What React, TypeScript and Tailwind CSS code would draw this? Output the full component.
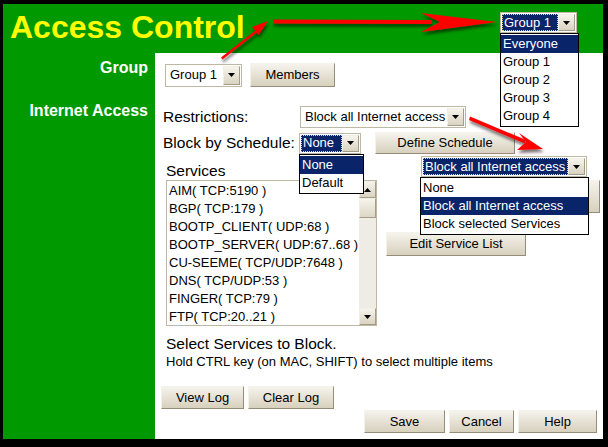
import React from 'react';

const services = [
  'AIM( TCP:5190 )',
  'BGP( TCP:179 )',
  'BOOTP_CLIENT( UDP:68 )',
  'BOOTP_SERVER( UDP:67..68 )',
  'CU-SEEME( TCP/UDP:7648 )',
  'DNS( TCP/UDP:53 )',
  'FINGER( TCP:79 )',
  'FTP( TCP:20..21 )',
];

function Caret({ up }: { up?: boolean }) {
  return (
    <svg width="7" height="4" viewBox="0 0 7 4">
      <path d={up ? 'M0 4h7L3.5 0z' : 'M0 0h7L3.5 4z'} fill="#000" />
    </svg>
  );
}

function ArrowButton({ up, className = '' }: { up?: boolean; className?: string }) {
  return (
    <div
      className={`flex items-center justify-center border border-[#F1EEE4] border-r-[#A39C86] border-b-[#A39C86] bg-linear-to-b from-[#F6F4EC] to-[#D9D3C1] ${className}`}
    >
      <Caret up={up} />
    </div>
  );
}

function Select({ value, className = '', active }: { value: string; className?: string; active?: boolean }) {
  return (
    <div className={`flex border border-[#BDB8A4] bg-white p-px text-[13px] ${className}`}>
      <div
        className={
          active
            ? 'flex flex-1 items-center whitespace-nowrap bg-[#0A246A] pl-[2px] text-white outline-1 outline-dotted outline-[#E8D890] -outline-offset-1'
            : 'flex flex-1 items-center whitespace-nowrap pl-[3px]'
        }
      >
        {value}
      </div>
      <ArrowButton className="w-[17px]" />
    </div>
  );
}

function DropList({ items, selected, className = '' }: { items: string[]; selected: number; className?: string }) {
  return (
    <div className={`border border-black bg-white py-px text-[13px] ${className}`}>
      {items.map((it, i) => (
        <div
          key={it}
          className={
            i === selected
              ? 'h-[18px] whitespace-nowrap bg-[#0A246A] pl-[2px] leading-[18px] text-white'
              : 'h-[18px] whitespace-nowrap pl-[2px] leading-[18px]'
          }
        >
          {it}
        </div>
      ))}
    </div>
  );
}

function Btn({ children, className = '' }: { children?: React.ReactNode; className?: string }) {
  return (
    <div
      className={`flex items-center justify-center text-[13px] border border-[#F4F2EA] border-r-[#958D79] border-b-[#958D79] bg-linear-to-b from-[#F5F3EC] to-[#D7D0BD] ${className}`}
    >
      {children}
    </div>
  );
}

export default function App() {
  return (
    <div className="relative h-[447px] w-[608px] bg-black pt-[4px] pr-[5px] pb-[8px] pl-[3px] font-['Liberation_Sans',Arial,sans-serif] text-black">
      <div className="flex h-full w-full flex-col bg-[#009900]">
        <div className="h-[49px] shrink-0 pt-[7px] pl-[7px] text-[32px] leading-[32px] font-bold text-[#FFFF00]">
          Access Control
        </div>

        <div className="flex flex-1">
          <div className="w-[152px] shrink-0 pt-[7px] pr-[7px] text-right text-[16px] leading-[16px] font-bold text-white">
            <div>Group</div>
            <div className="mt-[27px]">Internet Access</div>
          </div>

          <div className="flex flex-1 flex-col bg-white text-[15.5px] leading-[16px]">
            {/* group */}
            <div className="mt-[10px] flex h-[24px] items-center pl-[10px]">
              <Select value="Group 1" className="h-[23px] w-[77px]" />
              <Btn className="ml-[8px] h-[24px] w-[85px] border-[#222] border-r-[#111] border-b-[#111]">Members</Btn>
            </div>

            {/* restrictions */}
            <div className="mt-[19px] flex h-[22px] items-center pl-[8px]">
              <span className="w-[137px]">Restrictions:</span>
              <Select value="Block all Internet access" className="h-[22px] w-[166px]" />
            </div>

            {/* schedule */}
            <div className="mt-[4px] flex h-[22px] items-center pl-[8px]">
              <span className="w-[136px]">Block by Schedule:</span>
              <div className="relative">
                <Select value="None" active className="h-[21px] w-[62px]" />
                <DropList items={['None', 'Default']} selected={0} className="absolute top-[21px] left-0 z-10 w-[65px]" />
              </div>
              <Btn className="ml-[14px] h-[22px] w-[140px]">Define Schedule</Btn>
            </div>

            {/* services */}
            <div className="mt-[9px] pl-[11px]">Services</div>
            <div className="mt-px flex pl-[11px]">
              <div className="flex h-[146px] w-[211px] border border-[#BDB8A4] bg-white">
                <div className="flex-1 overflow-hidden pt-px pl-[2px] text-[13px] leading-[18px]">
                  {services.map((s) => (
                    <div key={s} className="whitespace-nowrap">
                      {s}
                    </div>
                  ))}
                </div>
                <div className="flex w-[17px] flex-col">
                  <ArrowButton up className="h-[17px]" />
                  <div className="h-[20px] border border-[#F1EEE4] border-r-[#A39C86] border-b-[#A39C86] bg-linear-to-b from-[#F6F4EC] to-[#DCD6C5]" />
                  <div className="flex-1 bg-[#EEECE4]" />
                  <ArrowButton className="h-[17px]" />
                </div>
              </div>
              <div className="ml-[9px] flex flex-1 flex-col">
                <Btn className="ml-[44px] h-[33px] w-[170px]" />
                <Btn className="mt-[19px] h-[24px] w-[140px]">Edit Service List</Btn>
              </div>
            </div>

            <div className="mt-[10px] pl-[11px]">Select Services to Block.</div>
            <div className="mt-[2px] pl-[11px] text-[13px] leading-[15px]">
              Hold CTRL key (on MAC, SHIFT) to select multiple items
            </div>

            <div className="mt-[17px] flex gap-[4px] pl-[6px]">
              <Btn className="h-[23px] w-[83px]">View Log</Btn>
              <Btn className="h-[23px] w-[86px]">Clear Log</Btn>
            </div>
            <div className="mt-px flex justify-end gap-[4px] pr-[6px]">
              <Btn className="h-[23px] w-[81px]">Save</Btn>
              <Btn className="h-[23px] w-[65px]">Cancel</Btn>
              <Btn className="h-[23px] w-[79px]">Help</Btn>
            </div>
          </div>
        </div>
      </div>

      {/* open group dropdown (annotation) */}
      <div className="absolute top-[12px] left-[500px] z-20">
        <Select value="Group 1" active className="h-[21px] w-[77px] bg-white" />
        <DropList items={['Everyone', 'Group 1', 'Group 2', 'Group 3', 'Group 4']} selected={0} className="w-[79px]" />
      </div>

      {/* open restrictions dropdown (annotation) */}
      <div className="absolute top-[156px] left-[420px] z-20">
        <Select value="Block all Internet access" active className="ml-px h-[21px] w-[166px] bg-white" />
        <DropList
          items={['None', 'Block all Internet access', 'Block selected Services']}
          selected={1}
          className="w-[169px]"
        />
      </div>

      {/* red arrows */}
      <svg className="pointer-events-none absolute top-0 left-0 z-30" width="608" height="447" viewBox="0 0 608 447">
        <defs>
          <filter id="sh" x="-20%" y="-50%" width="140%" height="200%">
            <feDropShadow dx="1" dy="3" stdDeviation="1.5" floodColor="#000" floodOpacity="0.55" />
          </filter>
        </defs>
        <g fill="#FF0000" stroke="none" filter="url(#sh)">
          <path d="M221 57.5 L256 30 L257.5 32 L222.5 59.5 Z" />
          <path d="M268 21 L252 27 L255.5 31 L258.6 35 Z" />
          <path d="M273 19.5 L432 20 L432 24 L273 23.5 Z" />
          <path d="M497 22 L421 13 L440 22 L421 32 Z" />
          <path d="M470 116.5 L526 140 L524.5 143.5 L469 120 Z" />
          <path d="M543 149 L519 133 L526 142 L517 150 Z" />
        </g>
      </svg>
    </div>
  );
}
